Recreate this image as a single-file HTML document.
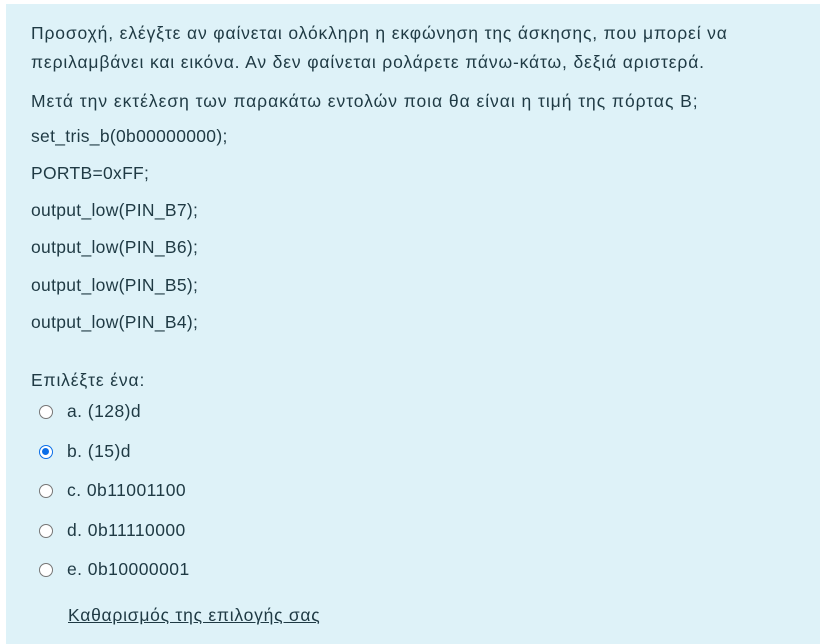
<!DOCTYPE html>
<html><head><meta charset="utf-8"><style>
body{margin:0;background:#fff;width:827px;height:638px;overflow:hidden;font-family:"Liberation Sans","DejaVu Sans",sans-serif;font-size:17.5px;letter-spacing:0.85px;color:#1f3a44;}
.panel{position:absolute;left:6px;top:4px;width:814px;height:640px;background:#def2f8;}
.t{position:absolute;left:31px;white-space:nowrap;line-height:20px;}
.k{letter-spacing:0.3px}
.o{position:absolute;left:39px;white-space:nowrap;line-height:20px;letter-spacing:0.45px}
.r{display:inline-block;width:14px;height:14px;border:1px solid #767676;border-radius:50%;background:#fff;vertical-align:-2px;margin-right:14px;box-sizing:border-box;}
.r.c{border:1.5px solid #0b6ee8;position:relative}
.r.c:after{content:"";position:absolute;left:2px;top:2px;width:7px;height:7px;border-radius:50%;background:#0b6ee8}
a{color:#1f3a44;text-decoration:underline}
</style></head><body>
<div class="panel"></div>
<div class="t" style="top:23px">Προσοχή, ελέγξτε αν φαίνεται ολόκληρη η εκφώνηση της άσκησης, που μπορεί να</div>
<div class="t" style="top:52px">περιλαμβάνει και εικόνα. Αν δεν φαίνεται ρολάρετε πάνω-κάτω, δεξιά αριστερά.</div>
<div class="t" style="top:91px;letter-spacing:0.95px">Μετά την εκτέλεση των παρακάτω εντολών ποια θα είναι η τιμή της πόρτας Β;</div>
<div class="t k" style="top:126px">set_tris_b(0b00000000);</div>
<div class="t k" style="top:163px">PORTB=0xFF;</div>
<div class="t k" style="top:200px">output_low(PIN_B7);</div>
<div class="t k" style="top:237px">output_low(PIN_B6);</div>
<div class="t k" style="top:275px">output_low(PIN_B5);</div>
<div class="t k" style="top:312px">output_low(PIN_B4);</div>
<div class="t" style="top:370px">Επιλέξτε ένα:</div>
<div class="o" style="top:401px"><span class="r"></span>a. (128)d</div>
<div class="o" style="top:441px"><span class="r c"></span>b. (15)d</div>
<div class="o" style="top:480px"><span class="r"></span>c. 0b11001100</div>
<div class="o" style="top:520px"><span class="r"></span>d. 0b11110000</div>
<div class="o" style="top:559px"><span class="r"></span>e. 0b10000001</div>
<div class="t" style="top:605px;left:68px;letter-spacing:0.75px"><a>Καθαρισμός της επιλογής σας</a></div>
</body></html>
